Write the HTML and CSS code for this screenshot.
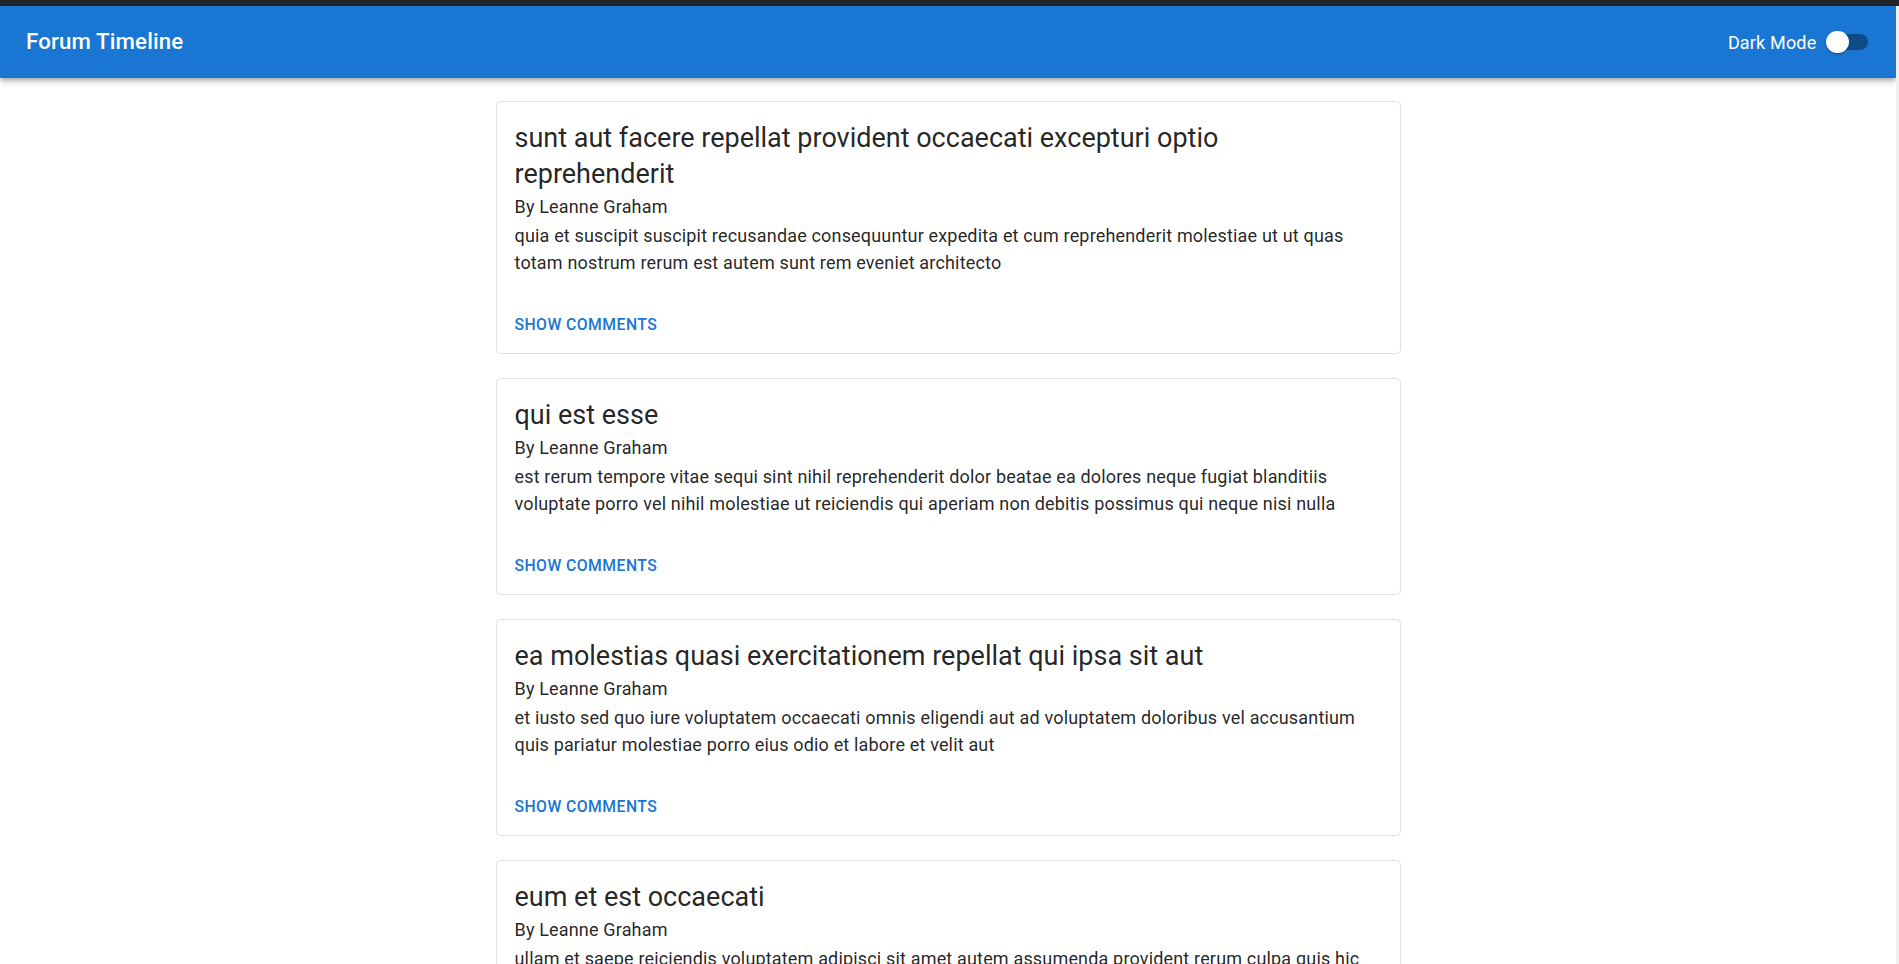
FILE: index.html
```html
<!DOCTYPE html>
<html lang="en">
<head>
<meta charset="utf-8">
<title>Forum Timeline</title>
<link rel="stylesheet" href="styles.css">
</head>
<body>
<div class="topstrip"></div>
<div class="viewport">
  <div class="page">
    <header class="appbar">
      <h1 class="brand">Forum Timeline</h1>
      <label class="mode">
        <span class="mode-label">Dark Mode</span>
        <span class="switch">
          <span class="track"></span>
          <span class="thumb"></span>
        </span>
      </label>
    </header>
    <main class="timeline">
      <article class="card">
        <div class="card-content">
          <h2 class="post-title">sunt aut facere repellat provident occaecati excepturi optio reprehenderit</h2>
          <div class="author">By Leanne Graham</div>
          <p class="post-body">quia et suscipit suscipit recusandae consequuntur expedita et cum reprehenderit molestiae ut ut quas totam nostrum rerum est autem sunt rem eveniet architecto</p>
        </div>
        <div class="card-actions"><button class="btn">Show comments</button></div>
      </article>
      <article class="card">
        <div class="card-content">
          <h2 class="post-title">qui est esse</h2>
          <div class="author">By Leanne Graham</div>
          <p class="post-body">est rerum tempore vitae sequi sint nihil reprehenderit dolor beatae ea dolores neque fugiat blanditiis voluptate porro vel nihil molestiae ut reiciendis qui aperiam non debitis possimus qui neque nisi nulla</p>
        </div>
        <div class="card-actions"><button class="btn">Show comments</button></div>
      </article>
      <article class="card">
        <div class="card-content">
          <h2 class="post-title">ea molestias quasi exercitationem repellat qui ipsa sit aut</h2>
          <div class="author">By Leanne Graham</div>
          <p class="post-body">et iusto sed quo iure voluptatem occaecati omnis eligendi aut ad voluptatem doloribus vel accusantium quis pariatur molestiae porro eius odio et labore et velit aut</p>
        </div>
        <div class="card-actions"><button class="btn">Show comments</button></div>
      </article>
      <article class="card">
        <div class="card-content">
          <h2 class="post-title">eum et est occaecati</h2>
          <div class="author">By Leanne Graham</div>
          <p class="post-body">ullam et saepe reiciendis voluptatem adipisci sit amet autem assumenda provident rerum culpa quis hic commodi nesciunt rem tenetur doloremque ipsam iure quis sunt voluptatem rerum illo velit</p>
        </div>
        <div class="card-actions"><button class="btn">Show comments</button></div>
      </article>
    </main>
  </div>
  <div class="gutter"></div>
</div>
</body>
</html>
```

FILE: styles.css
```css
* { box-sizing: border-box; }

html, body {
  margin: 0;
  padding: 0;
  height: 100%;
  overflow: hidden;
  background: #ffffff;
  font-family: Roboto, "Liberation Sans", Arial, sans-serif;
  color: rgba(0, 0, 0, 0.87);
}

body {
  display: flex;
  flex-direction: column;
}

.topstrip {
  height: 6px;
  flex: none;
  background: #212529;
}

.viewport {
  flex: 1;
  min-height: 0;
  display: flex;
  overflow: hidden;
  background: #ffffff;
}

.page {
  flex: 1;
  min-width: 0;
  overflow: hidden;
}

.gutter {
  flex: none;
  width: 3px;
  background: #efefef;
}

.appbar {
  position: relative;
  z-index: 2;
  height: 72px;
  display: flex;
  align-items: center;
  justify-content: space-between;
  padding: 0 27px 0 26px;
  background: #1976d2;
  color: #ffffff;
  box-shadow: 0 2px 4px -1px rgba(0,0,0,0.2), 0 4px 5px 0 rgba(0,0,0,0.14), 0 1px 10px 0 rgba(0,0,0,0.12);
}

.brand {
  margin: 0;
  font-size: 22.2px;
  font-weight: 500;
  line-height: 1.6;
  letter-spacing: 0.0075em;
}

.mode {
  display: flex;
  align-items: center;
  margin-right: -12.4px;
  cursor: pointer;
}

.mode-label {
  font-size: 18px;
  line-height: 1.5;
  letter-spacing: 0.00938em;
}

.switch {
  position: relative;
  display: inline-block;
  width: 65px;
  height: 43px;
  padding: 13.5px;
}

.track {
  display: block;
  width: 100%;
  height: 100%;
  border-radius: 8px;
  background: #0f4b87;
}

.thumb {
  position: absolute;
  left: 10px;
  top: 10px;
  width: 22.5px;
  height: 22.5px;
  border-radius: 50%;
  background: #ffffff;
  box-shadow: 0 2px 1px -1px rgba(0,0,0,0.2), 0 1px 1px 0 rgba(0,0,0,0.14), 0 1px 3px 0 rgba(0,0,0,0.12);
}

.timeline {
  width: 905px;
  margin: 0 auto;
  padding-top: 23px;
}

.card {
  border: 1px solid #e0e0e0;
  border-radius: 4.5px;
  background: #ffffff;
  margin-bottom: 24px;
  overflow: hidden;
}

.card-content {
  padding: 18px;
}

.post-title {
  margin: 0;
  font-size: 27px;
  font-weight: 400;
  line-height: 1.334;
}

.author {
  font-size: 18px;
  line-height: 30px;
  letter-spacing: 0.00938em;
}

.post-body {
  margin: 0;
  font-size: 18px;
  line-height: 1.5;
  letter-spacing: 0.00938em;
}

.card-actions {
  display: flex;
  align-items: center;
  padding: 10px 9px 8px;
}

.btn {
  border: 0;
  background: transparent;
  padding: 6.75px 9px;
  border-radius: 4.5px;
  font-family: Roboto, "Liberation Sans", Arial, sans-serif;
  font-size: 15.75px;
  font-weight: 500;
  line-height: 1.75;
  letter-spacing: 0.02857em;
  text-transform: uppercase;
  color: #1976d2;
  cursor: pointer;
}
```
